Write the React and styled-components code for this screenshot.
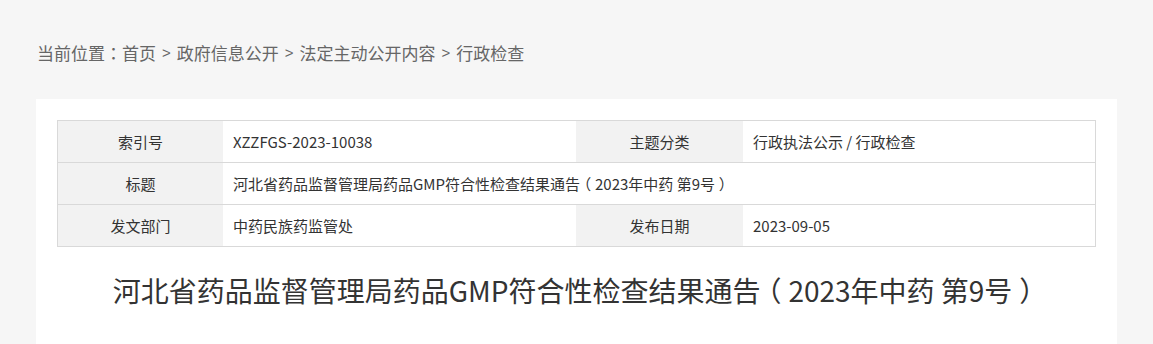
import React from "react";
import styled, { createGlobalStyle } from "styled-components";

const Global = createGlobalStyle`
  html, body { margin: 0; padding: 0; background: #f6f6f6; }
  body { font-family: "Noto Sans CJK SC", "Noto Sans", sans-serif; }
  * { box-sizing: border-box; }
`;

const Page = styled.div`
  padding: 0 36px;
  min-height: 344px;
`;

const Crumbs = styled.nav`
  height: 99px;
  display: flex;
  align-items: center;
  padding-left: 1px;
  padding-top: 5px;
  font-size: 17px;
  color: #666;
  white-space: nowrap;
`;

const Sep = styled.span`
  display: inline-block;
  padding: 0 6px;
  font-family: "Liberation Sans", sans-serif;
  font-size: 15px;
`;

const Punct = styled.span`
  font-family: "Noto Sans CJK TC", "Noto Sans CJK SC", sans-serif;
`;

const Paren = styled.span`
  display: inline-block;
  width: 1em;
  text-align: center;
  font-feature-settings: "halt";
`;

const Panel = styled.main`
  background: #fff;
  padding: 21px 21px 40px;
  min-height: 245px;
`;

const Table = styled.div`
  border: 1px solid #d9d9d9;
  font-size: 15px;
  color: #333;
`;

const Row = styled.div`
  display: grid;
  grid-template-columns: 165px 353px 167px 1fr;
  height: ${(p) => (p.$first ? 41 : 42)}px;
  border-top: ${(p) => (p.$first ? "none" : "1px solid #d9d9d9")};
`;

const Label = styled.div`
  background: #f2f2f2;
  display: flex;
  align-items: center;
  justify-content: center;
`;

const Value = styled.div`
  display: flex;
  align-items: center;
  padding-left: 10px;
  grid-column: ${(p) => (p.$wide ? "2 / span 3" : "auto")};
  white-space: nowrap;
`;

const Heading = styled.h1`
  margin: 22px 0 0;
  text-align: center;
  font-size: 28px;
  font-weight: normal;
  line-height: 42px;
  color: #333;
`;

function Text({ children }) {
  const parts = String(children).split(/([（）：])/);
  return (
    <span>
      {parts.map((p, i) => {
        if (p === "：") return <Punct key={i}>{p}</Punct>;
        if (p === "（" || p === "）") return <Paren key={i}>{p}</Paren>;
        return <React.Fragment key={i}>{p}</React.Fragment>;
      })}
    </span>
  );
}

const trail = ["政府信息公开", "法定主动公开内容", "行政检查"];
const title = "河北省药品监督管理局药品GMP符合性检查结果通告（2023年中药 第9号）";

export default function App() {
  return (
    <Page>
      <Global />
      <Crumbs>
        <Text>当前位置：首页</Text>
        {trail.map((t) => (
          <React.Fragment key={t}>
            <Sep>&gt;</Sep>
            {t}
          </React.Fragment>
        ))}
      </Crumbs>
      <Panel>
        <Table>
          <Row $first>
            <Label>索引号</Label>
            <Value>XZZFGS-2023-10038</Value>
            <Label>主题分类</Label>
            <Value>行政执法公示 / 行政检查</Value>
          </Row>
          <Row>
            <Label>标题</Label>
            <Value $wide>
              <Text>{title}</Text>
            </Value>
          </Row>
          <Row>
            <Label>发文部门</Label>
            <Value>中药民族药监管处</Value>
            <Label>发布日期</Label>
            <Value>2023-09-05</Value>
          </Row>
        </Table>
        <Heading>
          <Text>{title}</Text>
        </Heading>
      </Panel>
    </Page>
  );
}
